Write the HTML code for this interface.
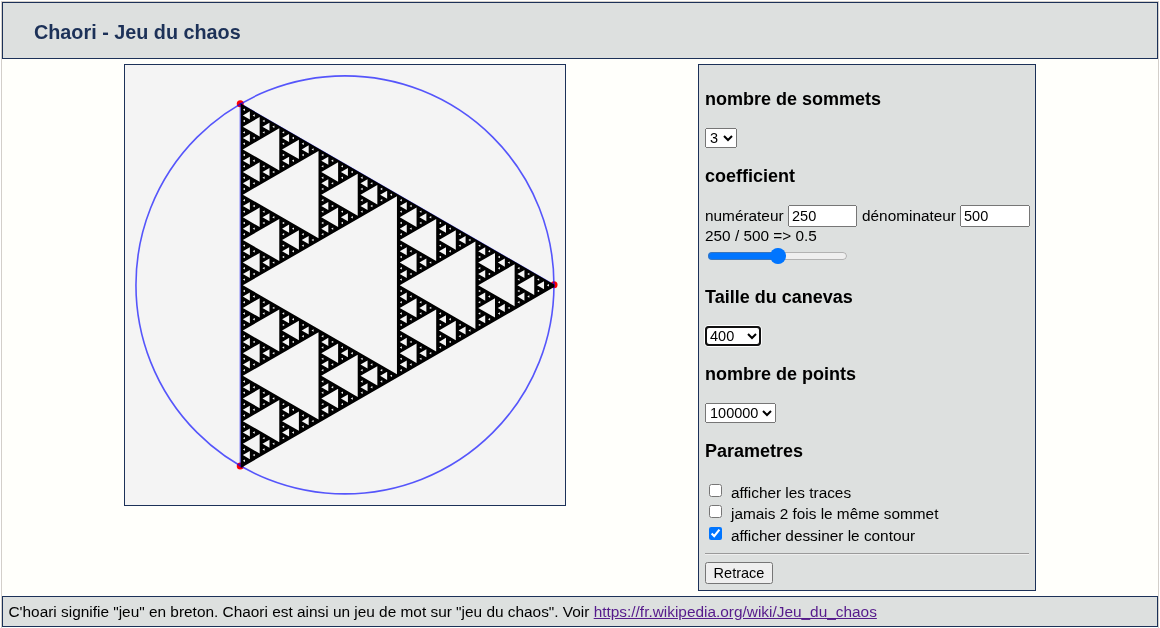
<!DOCTYPE html>
<html><head><meta charset="utf-8">
<style>
html,body{margin:0;padding:0;background:#fff;}
#root{position:absolute;left:0;top:0;width:1160px;height:628px;overflow:hidden;will-change:transform;}
body{width:1160px;height:628px;overflow:hidden;position:relative;font-family:"Liberation Sans",sans-serif;}
#wrap{position:absolute;left:1px;top:1px;width:1156px;height:640px;border:1px solid #d3cfca;background:#fffffb;}
#hdr{position:absolute;left:2px;top:2px;width:1154px;height:55px;border:1px solid #1c3158;background:#dde0df;}
#hdr h1{position:absolute;left:31px;top:18px;margin:0;font-size:19.8px;font-weight:bold;color:#1c3158;white-space:nowrap;}
#cv{position:absolute;left:124px;top:64px;width:440px;height:440px;border:1px solid #1c3158;background:#f4f4f4;}
#cv svg{position:absolute;left:0;top:0;}
#panel{position:absolute;left:698px;top:64px;width:336px;height:525px;border:1px solid #1c3158;background:#dde0df;}
.p{position:absolute;white-space:nowrap;color:#000;}
h3.p{margin:0;font-size:18px;font-weight:bold;}
.t{font-size:15.36px;}
.c{position:absolute;margin:0;font-family:"Liberation Sans",sans-serif;font-size:14.5px;box-sizing:border-box;}
.foc{position:absolute;box-sizing:border-box;border:2px solid #101010;border-radius:4px;box-shadow:0 0 0 1px #fff;}
#ftr{position:absolute;left:2px;top:596px;width:1154px;height:29px;border:1px solid #1c3158;background:#dde0df;}
#ftr span{position:absolute;left:5.5px;top:6px;font-size:15.4px;white-space:nowrap;color:#000;}
#ftr a{color:#551a8b;}
</style></head><body><div id="root">
<div id="wrap"></div>
<div id="hdr"><h1>Chaori - Jeu du chaos</h1></div>
<div id="cv"><svg width="440" height="440" viewBox="0 0 440 440">
<g fill="#ff0000"><circle cx="429.05" cy="219.8" r="3.5"/><circle cx="115.25" cy="38.63" r="3.5"/><circle cx="115.25" cy="400.97" r="3.5"/></g>
<circle cx="219.95" cy="219.9" r="209.0" fill="none" stroke="#0000ff" stroke-opacity="0.65" stroke-width="1.6"/>
<path d="M429.05 219.8L115.25 38.63L115.25 400.97Z" fill="none" stroke="#0000ff" stroke-opacity="0.6" stroke-width="1.2"/>
<clipPath id="tipc"><rect x="0" y="0" width="429.35" height="440"/></clipPath>
<path fill="#000" fill-rule="evenodd" clip-path="url(#tipc)" d="M431.35 220.78L115.75 38.57L115.75 402.99ZM271.95 131.29L117.85 220.26L271.95 309.23ZM350.4 176.59L274.75 220.26L350.4 263.94ZM389.62 199.23L353.2 220.26L389.62 241.29ZM409.24 210.56L392.42 220.26L409.24 229.97ZM419.04 216.22L412.04 220.26L419.04 224.31ZM423.95 219.05L421.84 220.26L423.95 221.48ZM414.14 213.39L412.04 214.6L414.14 215.81ZM414.14 224.71L412.04 225.92L414.14 227.14ZM399.43 204.89L392.42 208.94L399.43 212.98ZM404.33 207.72L402.23 208.94L404.33 210.15ZM394.53 202.06L392.42 203.28L394.53 204.49ZM394.53 213.39L392.42 214.6L394.53 215.81ZM399.43 227.54L392.42 231.59L399.43 235.63ZM404.33 230.37L402.23 231.59L404.33 232.8ZM394.53 224.71L392.42 225.92L394.53 227.14ZM394.53 236.03L392.42 237.25L394.53 238.46ZM370.01 187.91L353.2 197.62L370.01 207.32ZM379.82 193.57L372.81 197.62L379.82 201.66ZM384.72 196.4L382.62 197.62L384.72 198.83ZM374.92 190.74L372.81 191.95L374.92 193.17ZM374.92 202.06L372.81 203.28L374.92 204.49ZM360.21 182.25L353.2 186.29L360.21 190.34ZM365.11 185.08L363.01 186.29L365.11 187.51ZM355.3 179.42L353.2 180.63L355.3 181.84ZM355.3 190.74L353.2 191.95L355.3 193.17ZM360.21 204.89L353.2 208.94L360.21 212.98ZM365.11 207.72L363.01 208.94L365.11 210.15ZM355.3 202.06L353.2 203.28L355.3 204.49ZM355.3 213.39L353.2 214.6L355.3 215.81ZM370.01 233.2L353.2 242.91L370.01 252.62ZM379.82 238.86L372.81 242.91L379.82 246.95ZM384.72 241.69L382.62 242.91L384.72 244.12ZM374.92 236.03L372.81 237.25L374.92 238.46ZM374.92 247.36L372.81 248.57L374.92 249.78ZM360.21 227.54L353.2 231.59L360.21 235.63ZM365.11 230.37L363.01 231.59L365.11 232.8ZM355.3 224.71L353.2 225.92L355.3 227.14ZM355.3 236.03L353.2 237.25L355.3 238.46ZM360.21 250.19L353.2 254.23L360.21 258.28ZM365.11 253.02L363.01 254.23L365.11 255.45ZM355.3 247.36L353.2 248.57L355.3 249.78ZM355.3 258.68L353.2 259.89L355.3 261.11ZM311.18 153.94L274.75 174.97L311.18 196ZM330.79 165.26L313.97 174.97L330.79 184.68ZM340.59 170.92L333.59 174.97L340.59 179.01ZM345.5 173.75L343.39 174.97L345.5 176.18ZM335.69 168.09L333.59 169.31L335.69 170.52ZM335.69 179.42L333.59 180.63L335.69 181.84ZM320.98 159.6L313.98 163.65L320.98 167.69ZM325.88 162.43L323.78 163.65L325.88 164.86ZM316.08 156.77L313.97 157.98L316.08 159.2ZM316.08 168.09L313.98 169.31L316.08 170.52ZM320.98 182.25L313.97 186.29L320.98 190.34ZM325.88 185.08L323.78 186.29L325.88 187.51ZM316.08 179.42L313.98 180.63L316.08 181.84ZM316.08 190.74L313.98 191.95L316.08 193.17ZM291.56 142.62L274.75 152.32L291.56 162.03ZM301.37 148.28L294.36 152.32L301.37 156.37ZM306.27 151.11L304.17 152.32L306.27 153.54ZM296.47 145.45L294.36 146.66L296.47 147.87ZM296.47 156.77L294.36 157.98L296.47 159.2ZM281.76 136.95L274.75 141L281.76 145.04ZM286.66 139.78L284.56 141L286.66 142.21ZM276.85 134.12L274.75 135.34L276.85 136.55ZM276.85 145.45L274.75 146.66L276.85 147.87ZM281.76 159.6L274.75 163.65L281.76 167.69ZM286.66 162.43L284.56 163.65L286.66 164.86ZM276.85 156.77L274.75 157.98L276.85 159.2ZM276.85 168.09L274.75 169.31L276.85 170.52ZM291.56 187.91L274.75 197.62L291.56 207.32ZM301.37 193.57L294.36 197.62L301.37 201.66ZM306.27 196.4L304.17 197.62L306.27 198.83ZM296.47 190.74L294.36 191.95L296.47 193.17ZM296.47 202.06L294.36 203.28L296.47 204.49ZM281.76 182.25L274.75 186.29L281.76 190.34ZM286.66 185.08L284.56 186.29L286.66 187.51ZM276.85 179.42L274.75 180.63L276.85 181.84ZM276.85 190.74L274.75 191.95L276.85 193.17ZM281.76 204.89L274.75 208.94L281.76 212.98ZM286.66 207.72L284.56 208.94L286.66 210.15ZM276.85 202.06L274.75 203.28L276.85 204.49ZM276.85 213.39L274.75 214.6L276.85 215.81ZM311.18 244.53L274.75 265.56L311.18 286.58ZM330.79 255.85L313.98 265.56L330.79 275.26ZM340.59 261.51L333.59 265.56L340.59 269.6ZM345.5 264.34L343.39 265.56L345.5 266.77ZM335.69 258.68L333.59 259.89L335.69 261.11ZM335.69 270L333.59 271.22L335.69 272.43ZM320.98 250.19L313.97 254.23L320.98 258.28ZM325.88 253.02L323.78 254.23L325.88 255.45ZM316.08 247.36L313.98 248.57L316.08 249.78ZM316.08 258.68L313.98 259.89L316.08 261.11ZM320.98 272.83L313.98 276.88L320.98 280.92ZM325.88 275.66L323.78 276.88L325.88 278.09ZM316.08 270L313.98 271.22L316.08 272.43ZM316.08 281.33L313.98 282.54L316.08 283.75ZM291.56 233.2L274.75 242.91L291.56 252.62ZM301.37 238.86L294.36 242.91L301.37 246.95ZM306.27 241.69L304.17 242.91L306.27 244.12ZM296.47 236.03L294.36 237.25L296.47 238.46ZM296.47 247.36L294.36 248.57L296.47 249.78ZM281.76 227.54L274.75 231.59L281.76 235.63ZM286.66 230.37L284.56 231.59L286.66 232.8ZM276.85 224.71L274.75 225.92L276.85 227.14ZM276.85 236.03L274.75 237.25L276.85 238.46ZM281.76 250.19L274.75 254.23L281.76 258.28ZM286.66 253.02L284.56 254.23L286.66 255.45ZM276.85 247.36L274.75 248.57L276.85 249.78ZM276.85 258.68L274.75 259.89L276.85 261.11ZM291.56 278.49L274.75 288.2L291.56 297.91ZM301.37 284.16L294.36 288.2L301.37 292.25ZM306.27 286.99L304.17 288.2L306.27 289.42ZM296.47 281.33L294.36 282.54L296.47 283.75ZM296.47 292.65L294.36 293.86L296.47 295.08ZM281.76 272.83L274.75 276.88L281.76 280.92ZM286.66 275.66L284.56 276.88L286.66 278.09ZM276.85 270L274.75 271.22L276.85 272.43ZM276.85 281.33L274.75 282.54L276.85 283.75ZM281.76 295.48L274.75 299.52L281.76 303.57ZM286.66 298.31L284.56 299.52L286.66 300.74ZM276.85 292.65L274.75 293.86L276.85 295.08ZM276.85 303.97L274.75 305.19L276.85 306.4ZM193.5 86L117.85 129.68L193.5 173.35ZM232.72 108.65L196.3 129.68L232.72 150.71ZM252.34 119.97L235.52 129.68L252.34 139.38ZM262.14 125.63L255.14 129.68L262.14 133.72ZM267.05 128.46L264.94 129.68L267.05 130.89ZM257.24 122.8L255.14 124.01L257.24 125.23ZM257.24 134.12L255.14 135.34L257.24 136.55ZM242.53 114.31L235.52 118.35L242.53 122.4ZM247.43 117.14L245.33 118.35L247.43 119.57ZM237.63 111.48L235.52 112.69L237.63 113.9ZM237.63 122.8L235.52 124.01L237.63 125.23ZM242.53 136.95L235.52 141L242.53 145.04ZM247.43 139.78L245.33 141L247.43 142.21ZM237.63 134.12L235.52 135.34L237.63 136.55ZM237.63 145.45L235.52 146.66L237.63 147.87ZM213.11 97.32L196.3 107.03L213.11 116.74ZM222.92 102.98L215.91 107.03L222.92 111.07ZM227.82 105.81L225.72 107.03L227.82 108.24ZM218.02 100.15L215.91 101.37L218.02 102.58ZM218.02 111.48L215.91 112.69L218.02 113.9ZM203.31 91.66L196.3 95.71L203.31 99.75ZM208.21 94.49L206.11 95.71L208.21 96.92ZM198.4 88.83L196.3 90.04L198.4 91.26ZM198.4 100.15L196.3 101.37L198.4 102.58ZM203.31 114.31L196.3 118.35L203.31 122.4ZM208.21 117.14L206.11 118.35L208.21 119.57ZM198.4 111.48L196.3 112.69L198.4 113.9ZM198.4 122.8L196.3 124.01L198.4 125.23ZM213.11 142.62L196.3 152.32L213.11 162.03ZM222.92 148.28L215.91 152.32L222.92 156.37ZM227.82 151.11L225.72 152.32L227.82 153.54ZM218.02 145.45L215.91 146.66L218.02 147.87ZM218.02 156.77L215.91 157.98L218.02 159.2ZM203.31 136.95L196.3 141L203.31 145.04ZM208.21 139.78L206.11 141L208.21 142.21ZM198.4 134.12L196.3 135.34L198.4 136.55ZM198.4 145.45L196.3 146.66L198.4 147.87ZM203.31 159.6L196.3 163.65L203.31 167.69ZM208.21 162.43L206.11 163.65L208.21 164.86ZM198.4 156.77L196.3 157.98L198.4 159.2ZM198.4 168.09L196.3 169.31L198.4 170.52ZM154.28 63.35L117.85 84.38L154.28 105.41ZM173.89 74.68L157.07 84.38L173.89 94.09ZM183.69 80.34L176.69 84.38L183.69 88.43ZM188.6 83.17L186.49 84.38L188.6 85.6ZM178.79 77.51L176.69 78.72L178.79 79.94ZM178.79 88.83L176.69 90.04L178.79 91.26ZM164.08 69.01L157.07 73.06L164.08 77.1ZM168.98 71.84L166.88 73.06L168.98 74.27ZM159.18 66.18L157.07 67.4L159.18 68.61ZM159.18 77.51L157.07 78.72L159.18 79.94ZM164.08 91.66L157.07 95.71L164.08 99.75ZM168.98 94.49L166.88 95.71L168.98 96.92ZM159.18 88.83L157.07 90.04L159.18 91.26ZM159.18 100.15L157.07 101.37L159.18 102.58ZM134.66 52.03L117.85 61.74L134.66 71.44ZM144.47 57.69L137.46 61.74L144.47 65.78ZM149.37 60.52L147.27 61.74L149.37 62.95ZM139.57 54.86L137.46 56.07L139.57 57.29ZM139.57 66.18L137.46 67.4L139.57 68.61ZM124.86 46.37L117.85 50.41L124.86 54.46ZM129.76 49.2L127.66 50.41L129.76 51.63ZM119.95 43.54L117.85 44.75L119.95 45.97ZM119.95 54.86L117.85 56.07L119.95 57.29ZM124.86 69.01L117.85 73.06L124.86 77.1ZM129.76 71.84L127.66 73.06L129.76 74.27ZM119.95 66.18L117.85 67.4L119.95 68.61ZM119.95 77.51L117.85 78.72L119.95 79.94ZM134.66 97.32L117.85 107.03L134.66 116.74ZM144.47 102.98L137.46 107.03L144.47 111.07ZM149.37 105.81L147.27 107.03L149.37 108.24ZM139.57 100.15L137.46 101.37L139.57 102.58ZM139.57 111.48L137.46 112.69L139.57 113.9ZM124.86 91.66L117.85 95.71L124.86 99.75ZM129.76 94.49L127.66 95.71L129.76 96.92ZM119.95 88.83L117.85 90.04L119.95 91.26ZM119.95 100.15L117.85 101.37L119.95 102.58ZM124.86 114.31L117.85 118.35L124.86 122.4ZM129.76 117.14L127.66 118.35L129.76 119.57ZM119.95 111.48L117.85 112.69L119.95 113.9ZM119.95 122.8L117.85 124.01L119.95 125.23ZM154.28 153.94L117.85 174.97L154.28 196ZM173.89 165.26L157.07 174.97L173.89 184.68ZM183.69 170.92L176.69 174.97L183.69 179.01ZM188.6 173.75L186.49 174.97L188.6 176.18ZM178.79 168.09L176.69 169.31L178.79 170.52ZM178.79 179.42L176.69 180.63L178.79 181.84ZM164.08 159.6L157.07 163.65L164.08 167.69ZM168.98 162.43L166.88 163.65L168.98 164.86ZM159.18 156.77L157.07 157.98L159.18 159.2ZM159.18 168.09L157.07 169.31L159.18 170.52ZM164.08 182.25L157.07 186.29L164.08 190.34ZM168.98 185.08L166.88 186.29L168.98 187.51ZM159.18 179.42L157.07 180.63L159.18 181.84ZM159.18 190.74L157.07 191.95L159.18 193.17ZM134.66 142.62L117.85 152.32L134.66 162.03ZM144.47 148.28L137.46 152.32L144.47 156.37ZM149.37 151.11L147.27 152.32L149.37 153.54ZM139.57 145.45L137.46 146.66L139.57 147.87ZM139.57 156.77L137.46 157.98L139.57 159.2ZM124.86 136.95L117.85 141L124.86 145.04ZM129.76 139.78L127.66 141L129.76 142.21ZM119.95 134.12L117.85 135.34L119.95 136.55ZM119.95 145.45L117.85 146.66L119.95 147.87ZM124.86 159.6L117.85 163.65L124.86 167.69ZM129.76 162.43L127.66 163.65L129.76 164.86ZM119.95 156.77L117.85 157.98L119.95 159.2ZM119.95 168.09L117.85 169.31L119.95 170.52ZM134.66 187.91L117.85 197.62L134.66 207.32ZM144.47 193.57L137.46 197.62L144.47 201.66ZM149.37 196.4L147.27 197.62L149.37 198.83ZM139.57 190.74L137.46 191.95L139.57 193.17ZM139.57 202.06L137.46 203.28L139.57 204.49ZM124.86 182.25L117.85 186.29L124.86 190.34ZM129.76 185.08L127.66 186.29L129.76 187.51ZM119.95 179.42L117.85 180.63L119.95 181.84ZM119.95 190.74L117.85 191.95L119.95 193.17ZM124.86 204.89L117.85 208.94L124.86 212.98ZM129.76 207.72L127.66 208.94L129.76 210.15ZM119.95 202.06L117.85 203.28L119.95 204.49ZM119.95 213.39L117.85 214.6L119.95 215.81ZM193.5 267.17L117.85 310.85L193.5 354.52ZM232.72 289.82L196.3 310.85L232.72 331.88ZM252.34 301.14L235.53 310.85L252.34 320.55ZM262.14 306.8L255.14 310.85L262.14 314.89ZM267.05 309.63L264.94 310.85L267.05 312.06ZM257.24 303.97L255.14 305.19L257.24 306.4ZM257.24 315.3L255.14 316.51L257.24 317.72ZM242.53 295.48L235.53 299.52L242.53 303.57ZM247.43 298.31L245.33 299.52L247.43 300.74ZM237.63 292.65L235.53 293.86L237.63 295.08ZM237.63 303.97L235.53 305.19L237.63 306.4ZM242.53 318.13L235.53 322.17L242.53 326.22ZM247.43 320.96L245.33 322.17L247.43 323.39ZM237.63 315.3L235.53 316.51L237.63 317.72ZM237.63 326.62L235.53 327.83L237.63 329.05ZM213.11 278.49L196.3 288.2L213.11 297.91ZM222.92 284.16L215.91 288.2L222.92 292.25ZM227.82 286.99L225.72 288.2L227.82 289.42ZM218.02 281.33L215.91 282.54L218.02 283.75ZM218.02 292.65L215.91 293.86L218.02 295.08ZM203.31 272.83L196.3 276.88L203.31 280.92ZM208.21 275.66L206.11 276.88L208.21 278.09ZM198.4 270L196.3 271.22L198.4 272.43ZM198.4 281.33L196.3 282.54L198.4 283.75ZM203.31 295.48L196.3 299.52L203.31 303.57ZM208.21 298.31L206.11 299.52L208.21 300.74ZM198.4 292.65L196.3 293.86L198.4 295.08ZM198.4 303.97L196.3 305.19L198.4 306.4ZM213.11 323.79L196.3 333.49L213.11 343.2ZM222.92 329.45L215.91 333.49L222.92 337.54ZM227.82 332.28L225.72 333.49L227.82 334.71ZM218.02 326.62L215.91 327.83L218.02 329.05ZM218.02 337.94L215.91 339.16L218.02 340.37ZM203.31 318.13L196.3 322.17L203.31 326.22ZM208.21 320.96L206.11 322.17L208.21 323.39ZM198.4 315.3L196.3 316.51L198.4 317.72ZM198.4 326.62L196.3 327.83L198.4 329.05ZM203.31 340.77L196.3 344.82L203.31 348.86ZM208.21 343.6L206.11 344.82L208.21 346.03ZM198.4 337.94L196.3 339.16L198.4 340.37ZM198.4 349.27L196.3 350.48L198.4 351.69ZM154.28 244.53L117.85 265.56L154.28 286.58ZM173.89 255.85L157.08 265.56L173.89 275.26ZM183.69 261.51L176.69 265.56L183.69 269.6ZM188.6 264.34L186.49 265.56L188.6 266.77ZM178.79 258.68L176.69 259.89L178.79 261.11ZM178.79 270L176.69 271.22L178.79 272.43ZM164.08 250.19L157.07 254.23L164.08 258.28ZM168.98 253.02L166.88 254.23L168.98 255.45ZM159.18 247.36L157.07 248.57L159.18 249.78ZM159.18 258.68L157.08 259.89L159.18 261.11ZM164.08 272.83L157.08 276.88L164.08 280.92ZM168.98 275.66L166.88 276.88L168.98 278.09ZM159.18 270L157.08 271.22L159.18 272.43ZM159.18 281.33L157.08 282.54L159.18 283.75ZM134.66 233.2L117.85 242.91L134.66 252.62ZM144.47 238.86L137.46 242.91L144.47 246.95ZM149.37 241.69L147.27 242.91L149.37 244.12ZM139.57 236.03L137.46 237.25L139.57 238.46ZM139.57 247.36L137.46 248.57L139.57 249.78ZM124.86 227.54L117.85 231.59L124.86 235.63ZM129.76 230.37L127.66 231.59L129.76 232.8ZM119.95 224.71L117.85 225.92L119.95 227.14ZM119.95 236.03L117.85 237.25L119.95 238.46ZM124.86 250.19L117.85 254.23L124.86 258.28ZM129.76 253.02L127.66 254.23L129.76 255.45ZM119.95 247.36L117.85 248.57L119.95 249.78ZM119.95 258.68L117.85 259.89L119.95 261.11ZM134.66 278.49L117.85 288.2L134.66 297.91ZM144.47 284.16L137.46 288.2L144.47 292.25ZM149.37 286.99L147.27 288.2L149.37 289.42ZM139.57 281.33L137.46 282.54L139.57 283.75ZM139.57 292.65L137.46 293.86L139.57 295.08ZM124.86 272.83L117.85 276.88L124.86 280.92ZM129.76 275.66L127.66 276.88L129.76 278.09ZM119.95 270L117.85 271.22L119.95 272.43ZM119.95 281.33L117.85 282.54L119.95 283.75ZM124.86 295.48L117.85 299.52L124.86 303.57ZM129.76 298.31L127.66 299.52L129.76 300.74ZM119.95 292.65L117.85 293.86L119.95 295.08ZM119.95 303.97L117.85 305.19L119.95 306.4ZM154.28 335.11L117.85 356.14L154.28 377.17ZM173.89 346.43L157.08 356.14L173.89 365.85ZM183.69 352.1L176.69 356.14L183.69 360.19ZM188.6 354.93L186.49 356.14L188.6 357.36ZM178.79 349.27L176.69 350.48L178.79 351.69ZM178.79 360.59L176.69 361.8L178.79 363.02ZM164.08 340.77L157.08 344.82L164.08 348.86ZM168.98 343.6L166.88 344.82L168.98 346.03ZM159.18 337.94L157.08 339.16L159.18 340.37ZM159.18 349.27L157.08 350.48L159.18 351.69ZM164.08 363.42L157.08 367.46L164.08 371.51ZM168.98 366.25L166.88 367.46L168.98 368.68ZM159.18 360.59L157.08 361.8L159.18 363.02ZM159.18 371.91L157.08 373.13L159.18 374.34ZM134.66 323.79L117.85 333.49L134.66 343.2ZM144.47 329.45L137.46 333.49L144.47 337.54ZM149.37 332.28L147.27 333.49L149.37 334.71ZM139.57 326.62L137.46 327.83L139.57 329.05ZM139.57 337.94L137.46 339.16L139.57 340.37ZM124.86 318.13L117.85 322.17L124.86 326.22ZM129.76 320.96L127.66 322.17L129.76 323.39ZM119.95 315.3L117.85 316.51L119.95 317.72ZM119.95 326.62L117.85 327.83L119.95 329.05ZM124.86 340.77L117.85 344.82L124.86 348.86ZM129.76 343.6L127.66 344.82L129.76 346.03ZM119.95 337.94L117.85 339.16L119.95 340.37ZM119.95 349.27L117.85 350.48L119.95 351.69ZM134.66 369.08L117.85 378.79L134.66 388.49ZM144.47 374.74L137.46 378.79L144.47 382.83ZM149.37 377.57L147.27 378.79L149.37 380ZM139.57 371.91L137.46 373.13L139.57 374.34ZM139.57 383.24L137.46 384.45L139.57 385.66ZM124.86 363.42L117.85 367.46L124.86 371.51ZM129.76 366.25L127.66 367.46L129.76 368.68ZM119.95 360.59L117.85 361.8L119.95 363.02ZM119.95 371.91L117.85 373.13L119.95 374.34ZM124.86 386.07L117.85 390.11L124.86 394.16ZM129.76 388.9L127.66 390.11L129.76 391.33ZM119.95 383.24L117.85 384.45L119.95 385.66ZM119.95 394.56L117.85 395.77L119.95 396.99Z"/>
</svg></div>
<div id="panel">
  <h3 class="p" style="left:6px;top:24px">nombre de sommets</h3>
  <select class="c" style="left:6px;top:63px;width:32px;height:20px"><option>3</option><option>4</option></select>
  <h3 class="p" style="left:6px;top:101px">coefficient</h3>
  <span class="p t" style="left:6px;top:142px">numérateur</span>
  <input class="c" type="text" value="250" style="left:89px;top:140px;width:69px;height:22px">
  <span class="p t" style="left:163px;top:142px">dénominateur</span>
  <input class="c" type="text" value="500" style="left:261px;top:140px;width:70px;height:22px">
  <span class="p t" style="left:6px;top:162px">250 / 500 =&gt; 0.5</span>
  <input class="c" type="range" min="0" max="100" value="50" style="left:8px;top:183px;width:141px;height:16px">
  <div style="position:absolute;left:70.5px;top:182.5px;width:16.6px;height:16.6px;border-radius:50%;background:#0075ff"></div>
  <h3 class="p" style="left:6px;top:222px">Taille du canevas</h3>
  <select class="c" style="left:6px;top:261px;width:56px;height:20px"><option>400</option><option>1000</option></select>
  <div class="foc" style="left:6px;top:261px;width:56px;height:20px"></div>
  <h3 class="p" style="left:6px;top:299px">nombre de points</h3>
  <select class="c" style="left:6px;top:338px;width:71px;height:20px"><option>100000</option></select>
  <h3 class="p" style="left:6px;top:376px">Parametres</h3>
  <input class="c" type="checkbox" style="left:10px;top:418.5px">
  <span class="p t" style="left:32px;top:419px">afficher les traces</span>
  <input class="c" type="checkbox" style="left:10px;top:440px">
  <span class="p t" style="left:32px;top:440px">jamais 2 fois le même sommet</span>
  <input class="c" type="checkbox" checked style="left:10px;top:462px">
  <span class="p t" style="left:32px;top:462px">afficher dessiner le contour</span>
  <div style="position:absolute;left:6px;top:488px;width:324px;height:0;border-top:1px solid #9a9a9a;border-bottom:1px solid #eee"></div>
  <button class="c" style="left:6px;top:497px;width:68px;height:22px">Retrace</button>
</div>
<div id="ftr"><span>C'hoari signifie "jeu" en breton. Chaori est ainsi un jeu de mot sur "jeu du chaos". Voir <a href="#">https://fr.wikipedia.org/wiki/Jeu_du_chaos</a></span></div>
</div></body></html>
